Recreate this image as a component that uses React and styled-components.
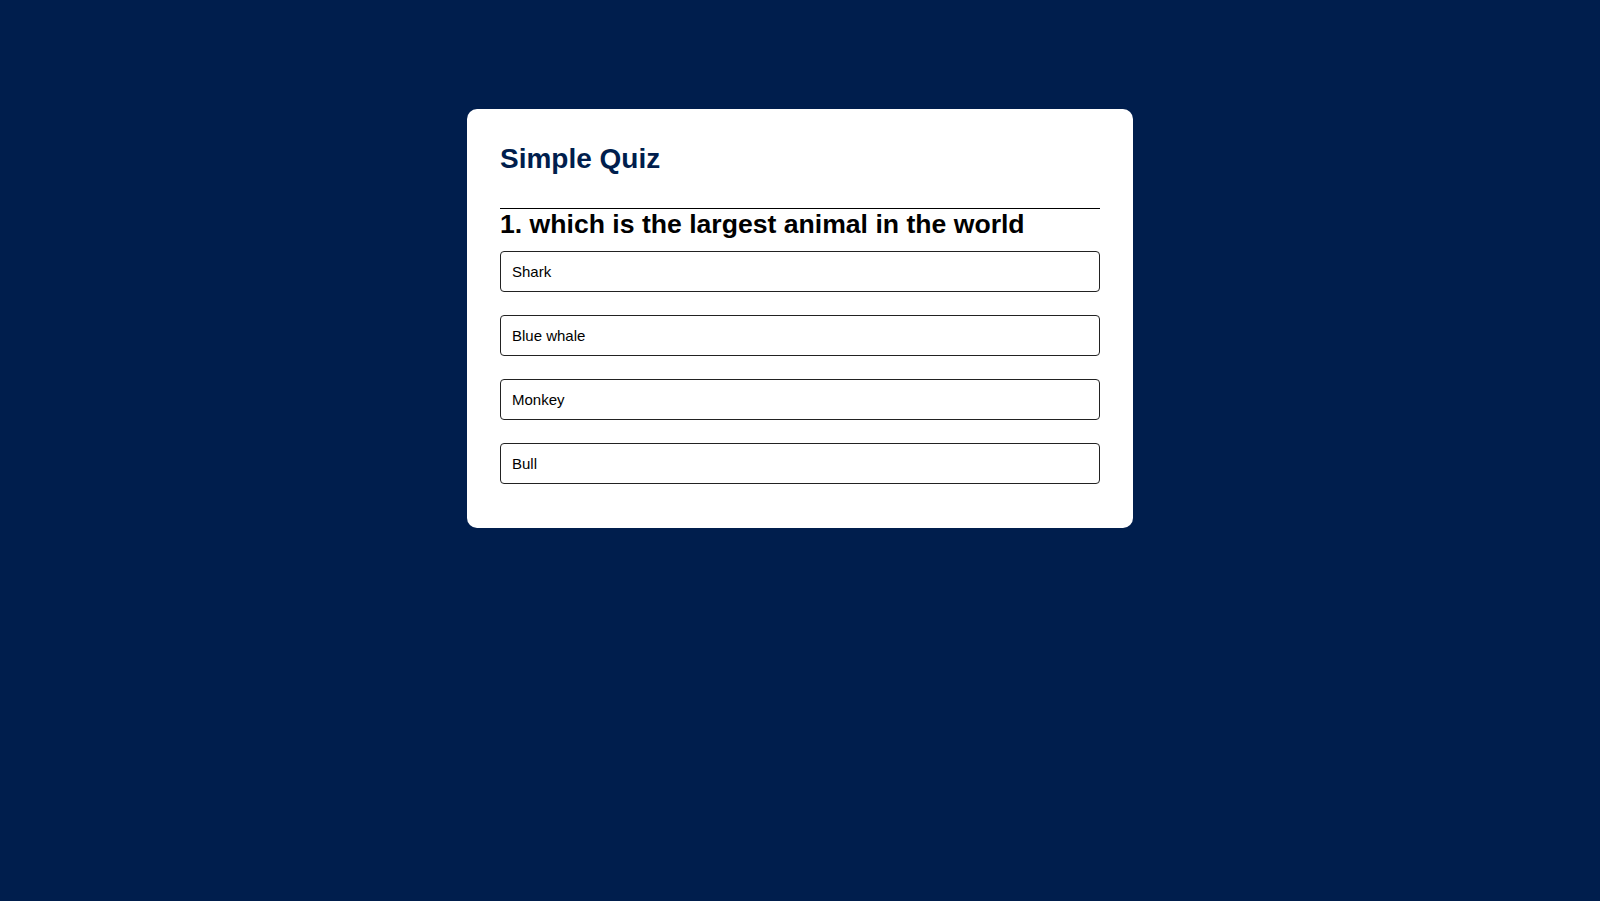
import styled, { createGlobalStyle } from 'styled-components'

const questions = [
    {
        text: "which is the largest animal in the world",
        answers: ["Shark", "Blue whale", "Monkey", "Bull"]
    }
]

const GlobalStyle = createGlobalStyle`
    * {
        box-sizing: border-box;
    }
    body {
        margin: 0;
        background: #001e4d;
        font-family: "Liberation Sans", Arial, sans-serif;
    }
`

const Page = styled.div`
    min-height: 100vh;
    padding-top: 109px;
    display: flex;
    justify-content: center;
    align-items: flex-start;
`

const Card = styled.div`
    width: 666px;
    background: #fff;
    border-radius: 10px;
    padding: 34px 33px 44px;
`

const Title = styled.h1`
    margin: 0;
    font-size: 28px;
    line-height: 32px;
    font-weight: 700;
    color: #001e4d;
    padding-bottom: 33px;
    border-bottom: 1px solid #000;
`

const Question = styled.h2`
    margin: 0 0 12px;
    font-size: 26.6px;
    line-height: 30px;
    font-weight: 700;
    color: #000;
`

const Answers = styled.div`
    display: flex;
    flex-direction: column;
    gap: 23px;
`

const AnswerButton = styled.button`
    display: block;
    width: 100%;
    height: 41px;
    padding: 0 11px;
    text-align: left;
    background: #fff;
    color: #000;
    border: 1px solid #222;
    border-radius: 4px;
    font-family: "Liberation Sans", Arial, sans-serif;
    font-size: 15px;
    cursor: pointer;
`

const App = () => {
    const current = 0
    const question = questions[current]

    return (
        <Page>
            <GlobalStyle />
            <Card>
                <Title>Simple Quiz</Title>
                <Question>{current + 1}. {question.text}</Question>
                <Answers>
                    {question.answers.map((value, index) => (
                        <AnswerButton key={index}>{value}</AnswerButton>
                    ))}
                </Answers>
            </Card>
        </Page>
    )
}

export default App
